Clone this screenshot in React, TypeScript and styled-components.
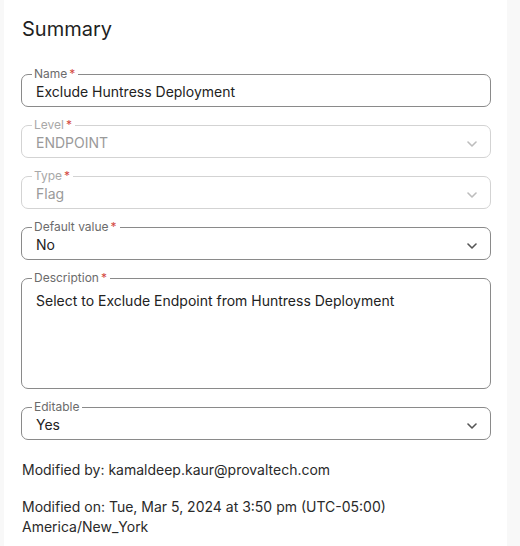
import styled, { createGlobalStyle } from 'styled-components'

const GlobalStyle = createGlobalStyle`
	html, body {
		margin: 0;
		padding: 0;
		background: #f8f8f8;
		font-family: Inter, "Liberation Sans", sans-serif;
	}
`

const Page = styled.main`
	display: flex;
	min-height: 546px;
	padding-left: 4px;
`

const Panel = styled.section`
	width: 503px;
	box-sizing: border-box;
	padding: 17px 16px 20px 17px;
	background: #fff;
	color: #222;
`

const Title = styled.h2`
	margin: 0 0 27px 1px;
	font-size: 20px;
	line-height: 24px;
	font-weight: 400;
	color: #1f1f1f;
`

const Form = styled.form`
	display: flex;
	flex-direction: column;
	gap: 12px;
`

const Field = styled.fieldset<{ $disabled?: boolean }>`
	position: relative;
	margin: 0;
	padding: 2px 30px 4px 14px;
	border: 1px solid ${p => (p.$disabled ? '#d3d3d3' : '#8a8a8a')};
	border-radius: 7px;
	min-width: 0;
`

const Legend = styled.legend<{ $disabled?: boolean }>`
	margin-left: -4px;
	padding: 0 3px 0 2px;
	font-size: 12px;
	line-height: 12px;
	color: ${p => (p.$disabled ? '#a8a8a8' : '#6b6b6b')};
`

const Star = styled.span`
	color: #d4493f;
	margin-left: 2px;
`

const Value = styled.div<{ $disabled?: boolean }>`
	font-size: 14px;
	line-height: 20px;
	color: ${p => (p.$disabled ? '#9a9a9a' : '#222')};
	white-space: nowrap;
`

const Multiline = styled(Value)`
	padding-top: 5px;
	min-height: 93px;
	white-space: normal;
`

const Chevron = styled.svg<{ $disabled?: boolean }>`
	position: absolute;
	right: 13px;
	top: 10px;
	width: 10px;
	height: 6px;
	stroke: ${p => (p.$disabled ? '#bdbdbd' : '#555')};
`

const Meta = styled.p`
	margin: 20px 0 0 1px;
	font-size: 14px;
	line-height: 20px;
	color: #2a2a2a;

	& + & {
		margin-top: 17px;
	}
`

type FieldProps = Readonly<{
	label: string
	value: string
	required?: boolean
	disabled?: boolean
	select?: boolean
	multiline?: boolean
}>

function FormField({ label, value, required, disabled, select, multiline }: FieldProps) {
	return (
		<Field $disabled={disabled}>
			<Legend $disabled={disabled}>
				{label}
				{required && <Star>*</Star>}
			</Legend>
			{multiline
				? <Multiline>{value}</Multiline>
				: <Value $disabled={disabled}>{value}</Value>}
			{select && (
				<Chevron $disabled={disabled} viewBox="0 0 10 6" fill="none" strokeWidth="1.6" strokeLinecap="round" strokeLinejoin="round">
					<path d="M1 1l4 4 4-4" />
				</Chevron>
			)}
		</Field>
	)
}

export default function App() {
	return (
		<>
			<GlobalStyle />
			<Page>
				<Panel>
					<Title>Summary</Title>
					<Form>
						<FormField label="Name" value="Exclude Huntress Deployment" required />
						<FormField label="Level" value="ENDPOINT" required disabled select />
						<FormField label="Type" value="Flag" required disabled select />
						<FormField label="Default value" value="No" required select />
						<FormField label="Description" value="Select to Exclude Endpoint from Huntress Deployment" required multiline />
						<FormField label="Editable" value="Yes" select />
					</Form>
					<Meta>Modified by: kamaldeep.kaur@provaltech.com</Meta>
					<Meta>
						Modified on: Tue, Mar 5, 2024 at 3:50 pm (UTC-05:00)
						<br />
						America/New_York
					</Meta>
				</Panel>
			</Page>
		</>
	)
}
